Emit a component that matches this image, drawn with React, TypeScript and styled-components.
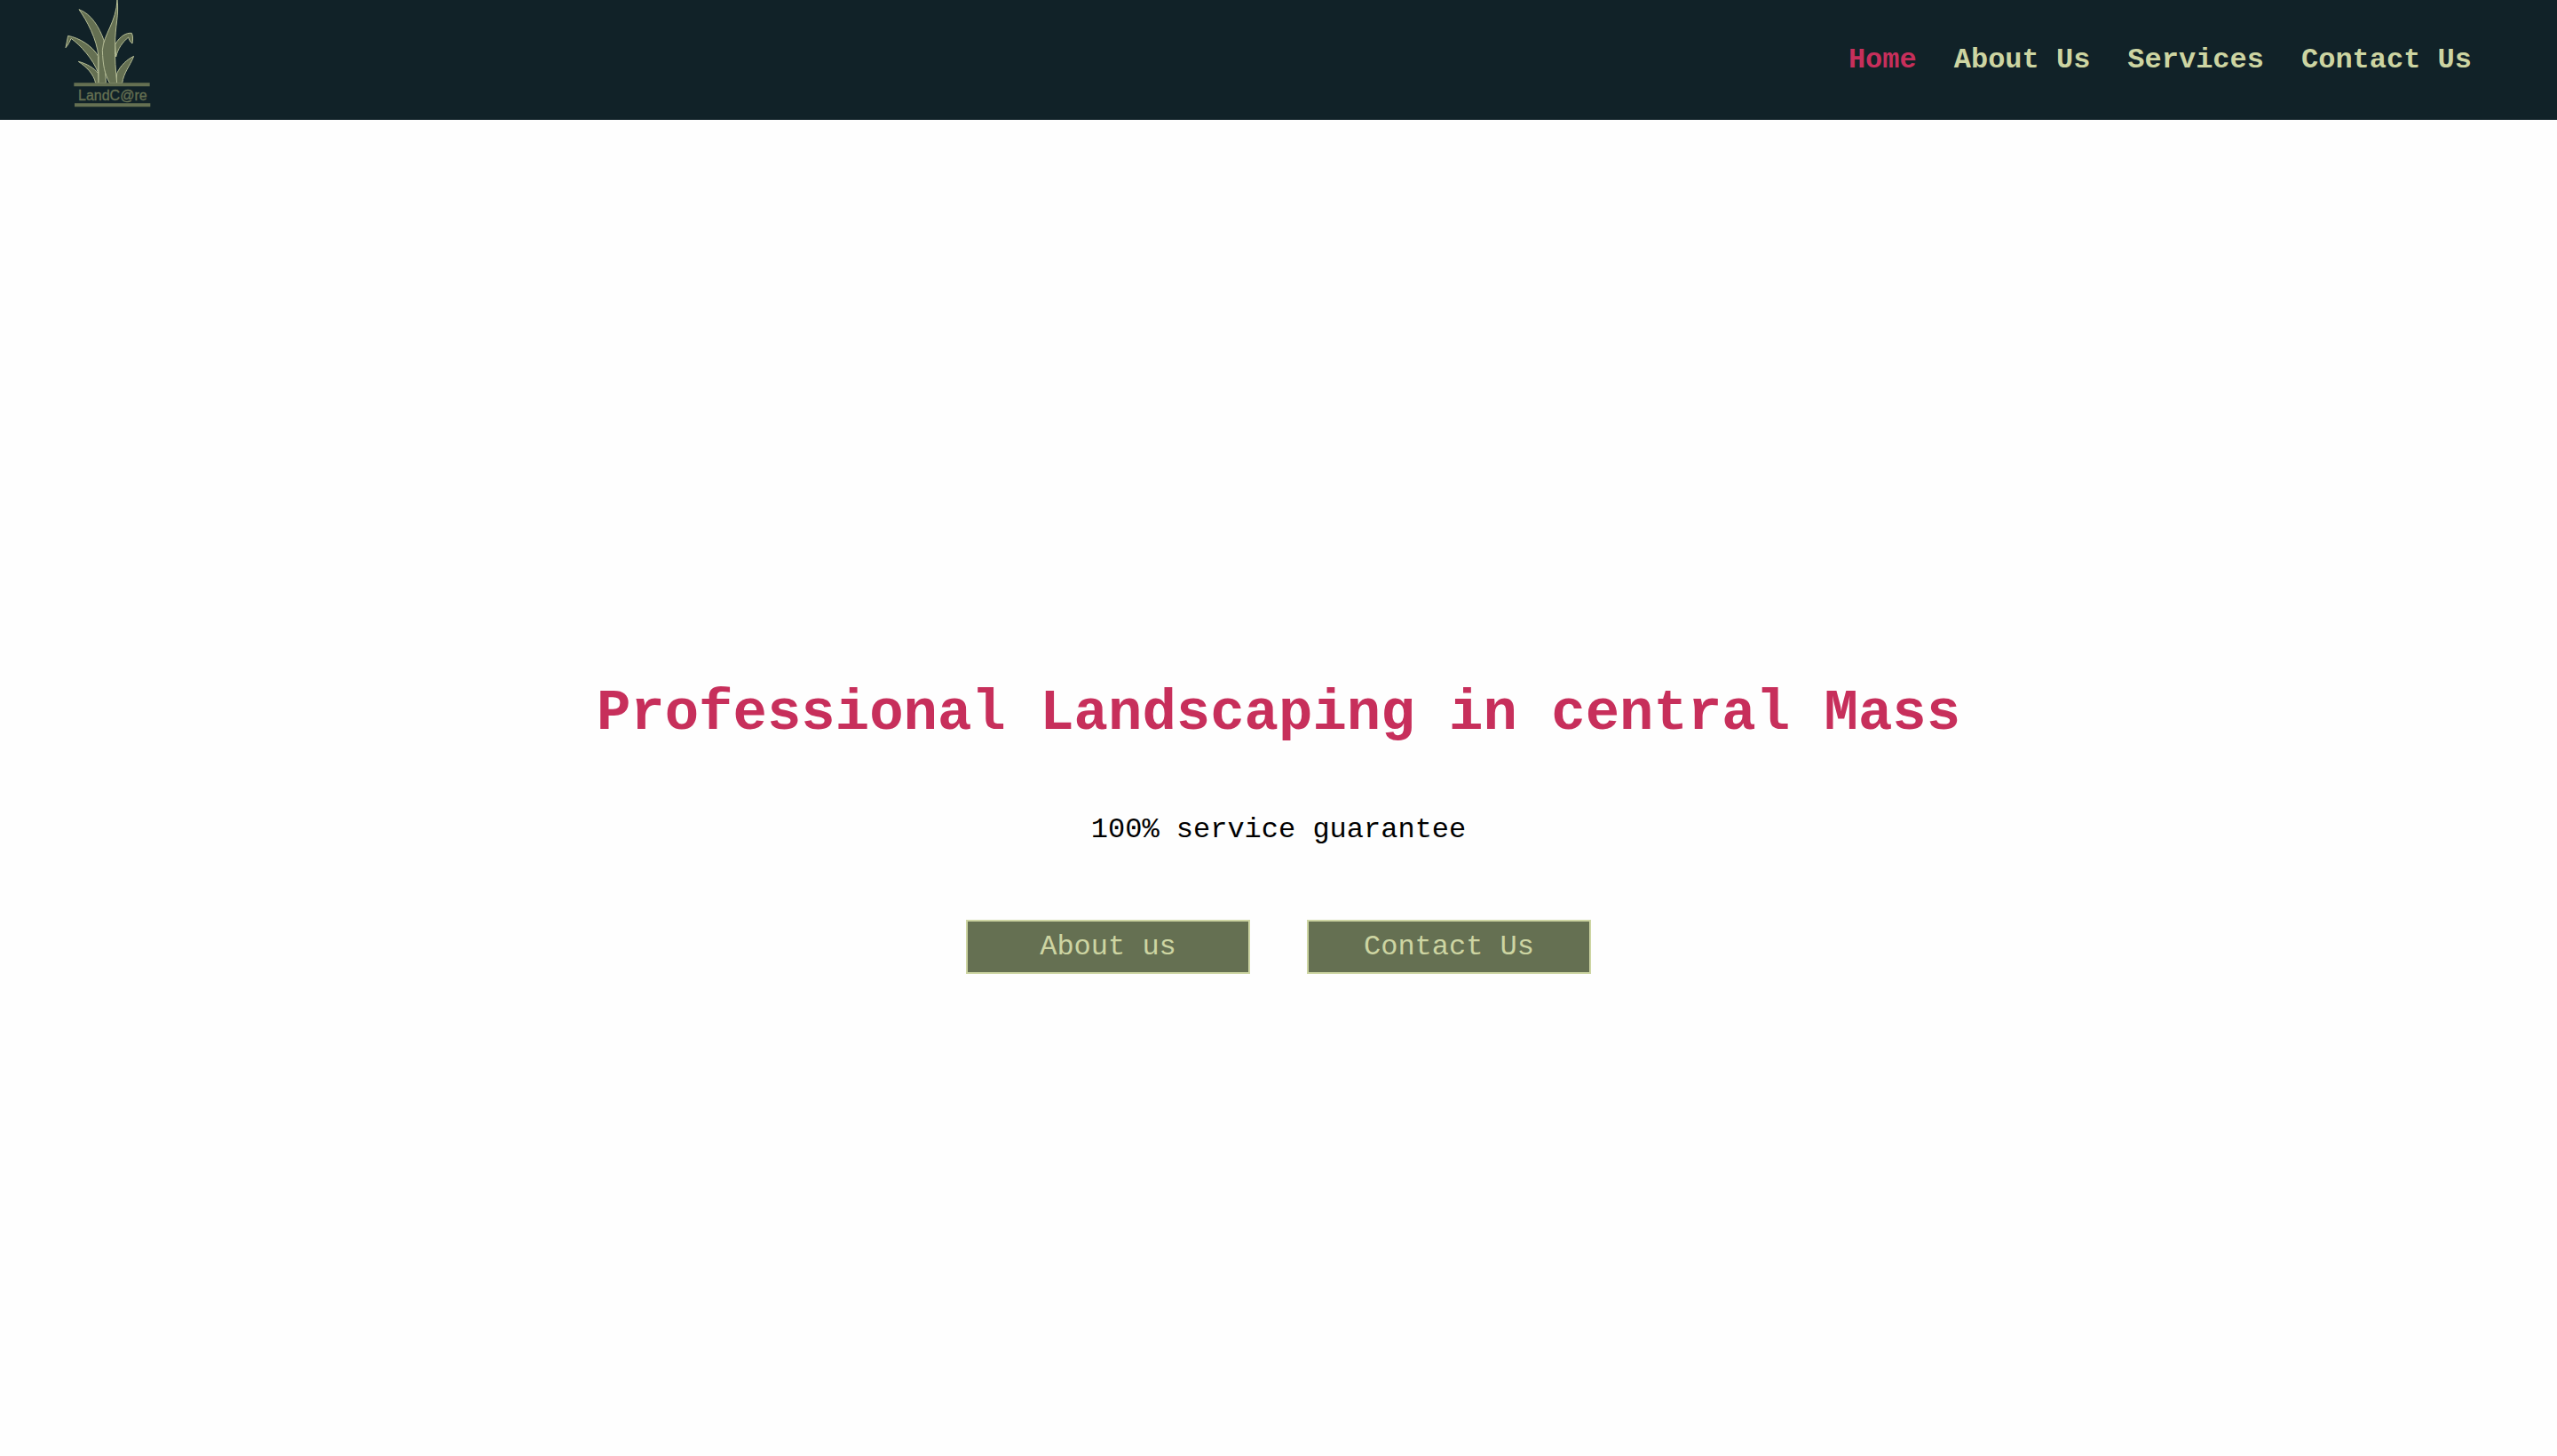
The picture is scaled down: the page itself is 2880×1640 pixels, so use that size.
import React from "react";
import styled, { createGlobalStyle } from "styled-components";

const colors = {
  night: "#112228",
  olive: "#657052",
  sage: "#cdd5a2",
  berry: "#c72f5b",
};

const GlobalStyle = createGlobalStyle`
  *, *::before, *::after { box-sizing: border-box; }
  body {
    margin: 0;
    background: #fefefe;
    color: #000;
    font-family: "Courier New", "Liberation Mono", monospace;
    font-size: 32px;
    line-height: 38px;
  }
`;

const Page = styled.div`
  min-height: 100vh;
  display: flex;
  flex-direction: column;
`;

const Header = styled.header`
  display: flex;
  align-items: center;
  justify-content: space-between;
  padding: 0 96px 0 50px;
  background: ${colors.night};
`;

const HomeLink = styled.a`
  display: block;
`;

const LogoArt = styled.svg`
  display: block;
  width: 140px;
  height: 135px;
`;

const LogoText = styled.text`
  font-family: "Liberation Sans", Arial, sans-serif;
  font-size: 48px;
  fill: ${colors.olive};
  stroke: ${colors.olive};
  stroke-width: 1px;
`;

const Menu = styled.ul`
  display: flex;
  gap: 42px;
  margin: 0;
  padding: 0;
  list-style: none;
`;

const MenuLink = styled.a<{ $active?: boolean }>`
  color: ${(p) => (p.$active ? colors.berry : colors.sage)};
  font-weight: 700;
  text-decoration: none;
`;

const Hero = styled.main`
  flex: 1;
  display: flex;
  flex-direction: column;
  align-items: center;
  justify-content: center;
  padding-top: 88px;
  text-align: center;
`;

const Title = styled.h1`
  margin: 0 0 75px;
  color: ${colors.berry};
  font-size: 64px;
  line-height: 74px;
`;

const Tagline = styled.p`
  margin: 0 0 82px;
`;

const Actions = styled.div`
  display: flex;
  gap: 64px;
`;

const ActionButton = styled.button`
  width: 320px;
  padding: 10px 12px 9px;
  border: 2px solid ${colors.sage};
  background: ${colors.olive};
  color: ${colors.sage};
  font: inherit;
  cursor: pointer;
`;

const menuItems = ["Home", "About Us", "Services", "Contact Us"];

const leaves = [
  "M115 208 C145 216 168 230 182 248 L184 281 L173 281 C167 250 142 226 115 208 Z",
  "M302 190 C288 225 268 245 263 281 L243 281 L245 248 C258 220 278 202 302 190 Z",
  "M72 161 L80 121 C120 129 162 155 182 190 L183 248 C165 200 120 150 90 130 C86 140 80 152 72 161 Z",
  "M239 150 C256 122 276 110 295 112 C300 122 299 136 297 147 C290 142 286 134 284 126 C264 142 248 165 242 192 Z",
  "M117 32 C160 48 185 92 201 136 L208 281 L183 281 L183 190 C176 130 145 72 117 32 Z",
  "M246 0 C253 50 238 90 239 150 C237 195 241 240 245 281 L221 281 C203 250 198 220 196 170 C200 115 243 75 246 0 Z",
];

function Logo() {
  return (
    <LogoArt viewBox="0 0 420 405" role="img" aria-label="LandC@re">
      <g fill={colors.olive} stroke="#b5bd96" strokeWidth="3" strokeLinejoin="round">
        {leaves.map((d) => (
          <path key={d} d={d} />
        ))}
      </g>
      <path d="M100 286H356M102 355H358" stroke={colors.olive} strokeWidth="12" />
      <LogoText x="114" y="340">LandC@re</LogoText>
    </LogoArt>
  );
}

export default function App() {
  return (
    <Page>
      <GlobalStyle />
      <Header>
        <HomeLink href="#home">
          <Logo />
        </HomeLink>
        <nav>
          <Menu>
            {menuItems.map((label, i) => (
              <li key={label}>
                <MenuLink href="#" $active={i === 0}>{label}</MenuLink>
              </li>
            ))}
          </Menu>
        </nav>
      </Header>
      <Hero>
        <Title>Professional Landscaping in central Mass</Title>
        <Tagline>100% service guarantee</Tagline>
        <Actions>
          <ActionButton type="button">About us</ActionButton>
          <ActionButton type="button">Contact Us</ActionButton>
        </Actions>
      </Hero>
    </Page>
  );
}
